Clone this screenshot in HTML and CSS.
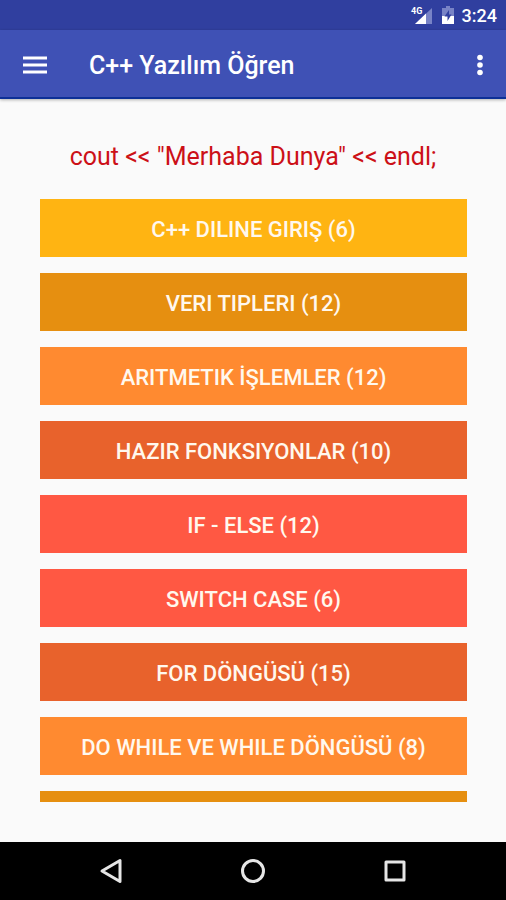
FILE: index.html
```html
<!DOCTYPE html>
<html lang="tr">
<head>
<meta charset="utf-8">
<meta name="viewport" content="width=device-width, initial-scale=1">
<title>C++ Yazılım Öğren</title>
<link rel="stylesheet" href="styles.css">
</head>
<body>
<div class="status">
  <svg width="24" height="20" viewBox="0 0 24 20" aria-hidden="true">
    <path d="M22 3V19H5Z" fill="#7883c6"/>
    <path d="M16 8.600V19H5Z" fill="#fff"/>
    <rect width="13" height="10" fill="#303f9f"/>
    <text x="1" y="9" class="network">4G</text>
  </svg>
  <svg width="12" height="20" viewBox="0 0 12 20" aria-hidden="true">
    <path d="M4 1H8V3H12V19H0V3H4Z" fill="#7883c6"/>
    <path d="M0 11H12V19H0Z" fill="#fff"/>
    <path d="M7 5L2.500 11.500H5.500V16L9.500 9.500H7Z" fill="#303f9f"/>
  </svg>
  <span class="clock">3:24</span>
</div>
<header class="appbar">
  <button class="icon" type="button" aria-label="Menü">
    <svg width="24" height="18" viewBox="0 0 24 18"><path d="M0 2H24M0 9H24M0 16H24" stroke="#fff" stroke-width="2.800"/></svg>
  </button>
  <h1>C++ Yazılım Öğren</h1>
  <button class="icon" type="button" aria-label="Diğer seçenekler">
    <svg width="6" height="22" viewBox="0 0 6 22" fill="#fff"><circle cx="3" cy="3.500" r="2.800"/><circle cx="3" cy="11" r="2.800"/><circle cx="3" cy="18.500" r="2.800"/></svg>
  </button>
</header>
<main>
  <p class="code">cout &lt;&lt; "Merhaba Dunya" &lt;&lt; endl;</p>
  <div class="topics">
    <button type="button" class="topic yellow">C++ DILINE GIRIŞ (6)</button>
    <button type="button" class="topic amber">VERI TIPLERI (12)</button>
    <button type="button" class="topic orange">ARITMETIK İŞLEMLER (12)</button>
    <button type="button" class="topic rust">HAZIR FONKSIYONLAR (10)</button>
    <button type="button" class="topic red">IF - ELSE (12)</button>
    <button type="button" class="topic red">SWITCH CASE (6)</button>
    <button type="button" class="topic rust">FOR DÖNGÜSÜ (15)</button>
    <button type="button" class="topic orange">DO WHILE VE WHILE DÖNGÜSÜ (8)</button>
    <button type="button" class="topic amber" aria-label="Sonraki konu"></button>
  </div>
</main>
<nav class="navbar">
  <button class="icon" type="button" aria-label="Geri">
    <svg width="24" height="26" viewBox="0 0 24 26"><path d="M21 2.500V23.500L3 13Z"/></svg>
  </button>
  <button class="icon" type="button" aria-label="Ana ekran">
    <svg width="26" height="26" viewBox="0 0 26 26"><circle cx="13" cy="13" r="10.500"/></svg>
  </button>
  <button class="icon" type="button" aria-label="Son uygulamalar">
    <svg width="24" height="24" viewBox="0 0 24 24"><rect x="3" y="3" width="18" height="18"/></svg>
  </button>
</nav>
</body>
</html>
```
FILE: styles.css
```css
* {
  box-sizing: border-box;
}

body {
  margin: 0;
  height: 100vh;
  display: flex;
  flex-direction: column;
  overflow: hidden;
  background: #fafafa;
  font-family: Roboto, "Liberation Sans", sans-serif;
}

button {
  border: 0;
  padding: 0;
  font: inherit;
  cursor: pointer;
}

svg {
  display: block;
}

.icon {
  display: flex;
  align-items: center;
  justify-content: center;
  background: none;
}

.status {
  flex: none;
  height: 30px;
  padding: 0 9px;
  display: flex;
  align-items: center;
  justify-content: flex-end;
  gap: 8px;
  background: #303f9f;
  color: #fff;
}

.network {
  font-size: 9px;
  font-weight: 700;
  fill: #fff;
}

.clock {
  padding-top: 2px;
  font-size: 18px;
  font-weight: 500;
  line-height: 28px;
}

.appbar {
  flex: none;
  height: 69px;
  padding: 2px 23px 0;
  display: flex;
  align-items: center;
  background: #3f51b5;
  border-bottom: 2px solid #0d3097;
  box-shadow: 0 1px 3px rgba(0, 0, 0, 0.3);
}

.appbar h1 {
  flex: 1;
  margin: 0 0 0 42px;
  padding-top: 2px;
  color: #fff;
  font-size: 25px;
  font-weight: 500;
  line-height: 32px;
}

main {
  flex: 1;
  min-height: 0;
  padding: 42px 39px 40px;
  display: flex;
  flex-direction: column;
}

.code {
  margin: 0 0 26px;
  color: #cc1017;
  font-size: 25px;
  line-height: 32px;
  text-align: center;
}

.topics {
  flex: 1;
  min-height: 0;
  padding-left: 1px;
  display: flex;
  flex-direction: column;
  gap: 16px;
  overflow: hidden;
}

.topic {
  flex: none;
  height: 58px;
  padding-top: 4px;
  color: #fff8ee;
  font-size: 22px;
  font-weight: 500;
  line-height: 28px;
}

.yellow { background: #ffb412; }
.amber { background: #e68f10; }
.orange { background: #ff8a30; }
.rust { background: #e8622c; }
.red { background: #ff5843; }

.navbar {
  flex: none;
  height: 58px;
  padding: 0 40px;
  display: grid;
  grid-template-columns: repeat(3, 1fr);
  background: #000;
}

.navbar svg {
  fill: none;
  stroke: #e6e6e6;
  stroke-width: 3;
  stroke-linejoin: round;
}
```
